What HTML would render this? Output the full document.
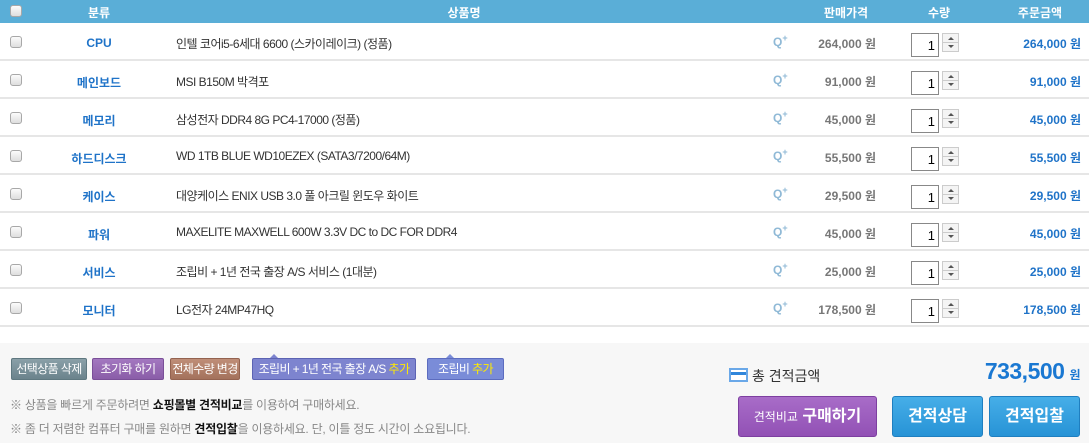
<!DOCTYPE html>
<html><head><meta charset="utf-8"><style>
*{margin:0;padding:0;box-sizing:border-box}
body{width:1089px;height:443px;background:#fff;font-family:"Liberation Sans","Noto Sans CJK KR",sans-serif;position:relative;overflow:hidden;color:#333}
.a{position:absolute;white-space:nowrap}
.hd{position:absolute;left:0;top:0;width:1089px;height:23px;background:#5aaed7}
.hd span{position:absolute;top:4px;color:#fff;font-size:12px;font-weight:bold;transform:translateX(-50%)}
.cb{position:absolute;width:12px;height:12px;border:1px solid #a8a8a8;border-radius:3px;background:linear-gradient(#fbfbfb,#dedede)}
.row{position:absolute;left:0;width:1089px;height:38px;border-bottom:2px solid #e6e6e6}
.cat{position:absolute;left:99px;top:13px;transform:translateX(-50%);color:#1f73c8;font-weight:bold;font-size:12px}
.nm{position:absolute;left:176px;top:12px;font-size:12px;color:#333;letter-spacing:-0.5px}
.q{position:absolute;left:773px;top:10px;color:#8fb9d6;font-weight:bold;font-size:12px}
.q sup{font-size:9px}
.pr{position:absolute;right:213px;top:12px;color:#777;font-weight:bold;font-size:12px}
.in{position:absolute;left:911px;top:10px;width:28px;height:24px;border:1px solid #888;background:#fff;font-size:13px;text-align:right;padding:4px 3px 0 0;color:#000}
.sp{position:absolute;left:942px;top:10px;width:17px;height:19px;border:1px solid #ccc;background:#f4f4f4}
.sp:after{content:"";position:absolute;left:0;top:8px;width:15px;height:1px;background:#ccc}
.sp i{position:absolute;left:5px;width:0;height:0;border-left:3px solid transparent;border-right:3px solid transparent}
.tt{position:absolute;right:8px;top:12px;color:#1f73c8;font-weight:bold;font-size:12px}
.btn{position:absolute;top:358px;height:22px;color:#fff;font-size:12px;text-align:center;line-height:21px;border-radius:2px;white-space:nowrap;letter-spacing:-0.6px;overflow:hidden}
.nt{position:absolute;left:10px;font-size:12px;color:#888;white-space:nowrap;letter-spacing:-0.25px}
.nt b{color:#111}
.bb{position:absolute;top:396px;height:41px;border-radius:3px;color:#fff;font-weight:bold;font-size:16px;text-align:center;line-height:40px}
</style></head><body>
<div class="hd">
<div class="cb" style="left:10px;top:5px"></div>
<span style="left:99px">분류</span><span style="left:464px">상품명</span><span style="left:846px">판매가격</span><span style="left:939px">수량</span><span style="left:1040px">주문금액</span>
</div>

<div class="row" style="top:23px"><div class="cb" style="left:10px;top:13px"></div><div class="cat">CPU</div><div class="nm">인텔 코어i5-6세대 6600 (스카이레이크) (정품)</div><div class="q">Q<sup>+</sup></div><div class="pr">264,000 원</div><div class="in">1</div><div class="sp"><i style="top:3px;border-bottom:3px solid #555"></i><i style="top:11px;border-top:3px solid #555"></i></div><div class="tt">264,000 원</div></div>
<div class="row" style="top:61px"><div class="cb" style="left:10px;top:13px"></div><div class="cat">메인보드</div><div class="nm">MSI B150M 박격포</div><div class="q">Q<sup>+</sup></div><div class="pr">91,000 원</div><div class="in">1</div><div class="sp"><i style="top:3px;border-bottom:3px solid #555"></i><i style="top:11px;border-top:3px solid #555"></i></div><div class="tt">91,000 원</div></div>
<div class="row" style="top:99px"><div class="cb" style="left:10px;top:13px"></div><div class="cat">메모리</div><div class="nm">삼성전자 DDR4 8G PC4-17000 (정품)</div><div class="q">Q<sup>+</sup></div><div class="pr">45,000 원</div><div class="in">1</div><div class="sp"><i style="top:3px;border-bottom:3px solid #555"></i><i style="top:11px;border-top:3px solid #555"></i></div><div class="tt">45,000 원</div></div>
<div class="row" style="top:137px"><div class="cb" style="left:10px;top:13px"></div><div class="cat">하드디스크</div><div class="nm">WD 1TB BLUE WD10EZEX (SATA3/7200/64M)</div><div class="q">Q<sup>+</sup></div><div class="pr">55,500 원</div><div class="in">1</div><div class="sp"><i style="top:3px;border-bottom:3px solid #555"></i><i style="top:11px;border-top:3px solid #555"></i></div><div class="tt">55,500 원</div></div>
<div class="row" style="top:175px"><div class="cb" style="left:10px;top:13px"></div><div class="cat">케이스</div><div class="nm">대양케이스 ENIX USB 3.0 풀 아크릴 윈도우 화이트</div><div class="q">Q<sup>+</sup></div><div class="pr">29,500 원</div><div class="in">1</div><div class="sp"><i style="top:3px;border-bottom:3px solid #555"></i><i style="top:11px;border-top:3px solid #555"></i></div><div class="tt">29,500 원</div></div>
<div class="row" style="top:213px"><div class="cb" style="left:10px;top:13px"></div><div class="cat">파워</div><div class="nm">MAXELITE MAXWELL 600W 3.3V DC to DC FOR DDR4</div><div class="q">Q<sup>+</sup></div><div class="pr">45,000 원</div><div class="in">1</div><div class="sp"><i style="top:3px;border-bottom:3px solid #555"></i><i style="top:11px;border-top:3px solid #555"></i></div><div class="tt">45,000 원</div></div>
<div class="row" style="top:251px"><div class="cb" style="left:10px;top:13px"></div><div class="cat">서비스</div><div class="nm">조립비 + 1년 전국 출장 A/S 서비스 (1대분)</div><div class="q">Q<sup>+</sup></div><div class="pr">25,000 원</div><div class="in">1</div><div class="sp"><i style="top:3px;border-bottom:3px solid #555"></i><i style="top:11px;border-top:3px solid #555"></i></div><div class="tt">25,000 원</div></div>
<div class="row" style="top:289px"><div class="cb" style="left:10px;top:13px"></div><div class="cat">모니터</div><div class="nm">LG전자 24MP47HQ</div><div class="q">Q<sup>+</sup></div><div class="pr">178,500 원</div><div class="in">1</div><div class="sp"><i style="top:3px;border-bottom:3px solid #555"></i><i style="top:11px;border-top:3px solid #555"></i></div><div class="tt">178,500 원</div></div>

<div class="a" style="left:0;top:343px;width:1089px;height:100px;background:#f7f7f7"></div>
<div class="btn" style="left:11px;width:76px;background:linear-gradient(#8aa0a8,#6b838c);border:1px solid #5f7880">선택상품 삭제</div>
<div class="btn" style="left:92px;width:72px;background:linear-gradient(#a378c0,#8a5da8);border:1px solid #7a4f98">초기화 하기</div>
<div class="btn" style="left:170px;width:70px;background:linear-gradient(#bf8e78,#a4725c);border:1px solid #946350">전체수량 변경</div>
<div class="btn" style="left:252px;width:164px;background:#7d84cf;border:1px solid #5c63b3">조립비 + 1년 전국 출장 A/S <span style="color:#ffea00">추가</span></div>
<div class="a" style="left:270px;top:354px;width:0;height:0;border-left:4px solid transparent;border-right:4px solid transparent;border-bottom:4px solid #7d84cf"></div>
<div class="btn" style="left:427px;width:77px;background:#7a8cd8;border:1px solid #5c6cbf">조립비 <span style="color:#ffea00">추가</span></div>
<div class="a" style="left:446px;top:354px;width:0;height:0;border-left:4px solid transparent;border-right:4px solid transparent;border-bottom:4px solid #7a8cd8"></div>
<div class="nt" style="top:396px">※ 상품을 빠르게 주문하려면 <b>쇼핑몰별 견적비교</b>를 이용하여 구매하세요.</div>
<div class="nt" style="top:420px">※ 좀 더 저렴한 컴퓨터 구매를 원하면 <b>견적입찰</b>을 이용하세요. 단, 이틀 정도 시간이 소요됩니다.</div>

<div class="a" style="left:729px;top:368px;width:19px;height:14px;border:2px solid #6aa8e8;background:#fff"><div style="margin-top:2px;height:3px;background:#2f86db"></div></div>
<div class="a" style="left:752px;top:366px;font-size:14px;color:#333">총 견적금액</div>
<div class="a" style="right:9px;top:358px;font-size:23px;font-weight:bold;color:#1a78d2;letter-spacing:-0.5px">733,500<span style="font-size:12px;margin-left:5px">원</span></div>
<div class="bb" style="left:738px;width:139px;background:linear-gradient(#a86cc8,#9251b5);border:1px solid #7d3fa0"><span style="font-size:12px;font-weight:normal">견적비교</span> 구매하기</div>
<div class="bb" style="left:892px;width:91px;background:linear-gradient(#46aee8,#2793d6);border:1px solid #1f7fc0">견적상담</div>
<div class="bb" style="left:989px;width:91px;background:linear-gradient(#46aee8,#2793d6);border:1px solid #1f7fc0">견적입찰</div>
</body></html>
